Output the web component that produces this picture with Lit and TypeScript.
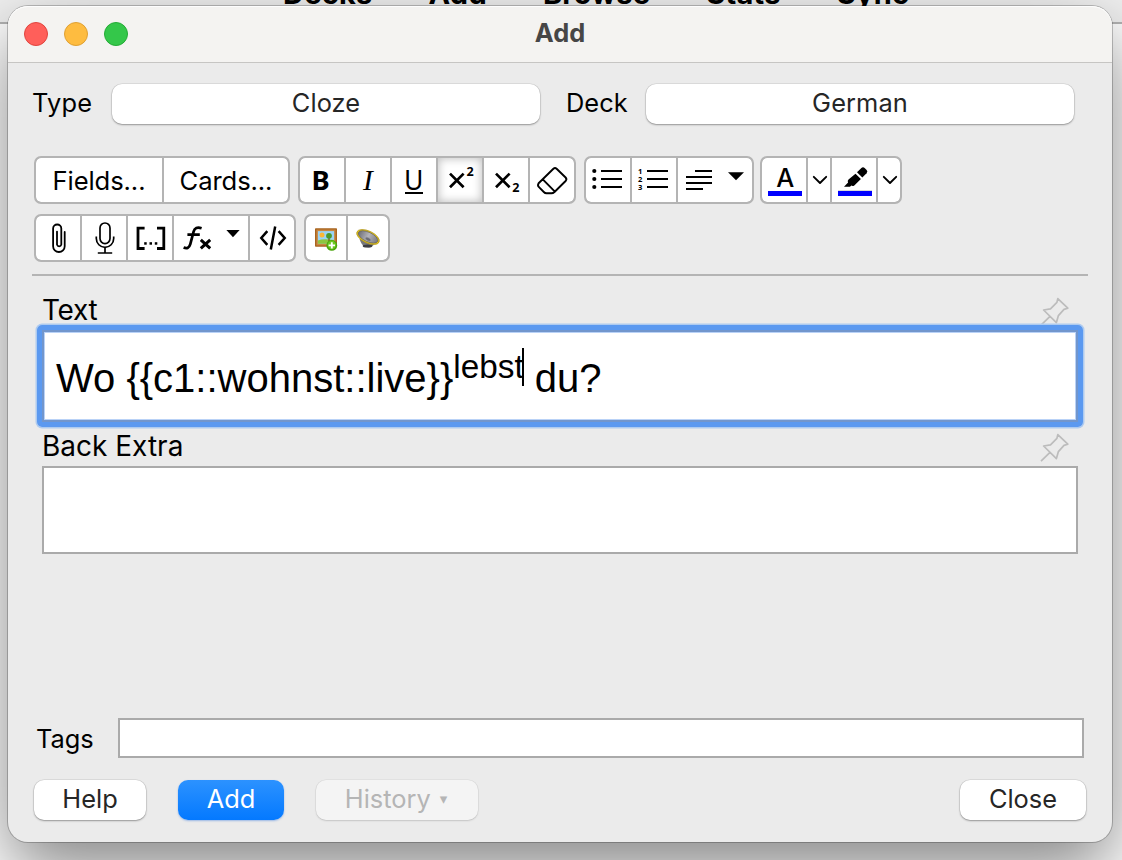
import { LitElement, html, svg, css, type TemplateResult, type SVGTemplateResult } from 'lit';
import { customElement, property } from 'lit/decorators.js';

// Icons share one coordinate space, the toolbar sheet; each button shows its own slice of it.
const slice = (x: number, y: number, w: number, h: number, art: SVGTemplateResult): TemplateResult =>
  html`<svg class="ico" width=${w} height=${h} viewBox="${x} ${y} ${w} ${h}">${art}</svg>`;

const r1 = (x: number, w: number, art: SVGTemplateResult) => slice(x, 158, w, 44, art);
const r2 = (x: number, w: number, art: SVGTemplateResult) => slice(x, 216, w, 44, art);

const cross = (x: number, y: number, w: number, h: number, sw: number) =>
  svg`<path d="M${x} ${y}l${w} ${h}M${x + w} ${y}l${-w} ${h}" stroke-width=${sw}/>`;

const bold = r1(300, 44, svg`<text class="noto b" x="311.6" y="190.2" font-size="27.4">B</text>`);
const italic = r1(346, 44, svg`<text class="serif" x="363" y="190" font-size="29.5">I</text>`);
const underline = r1(392, 44, svg`<text class="noto" x="404" y="189.8" font-size="26.6">U</text><path d="M405 193h18" stroke-width="2"/>`);
const sup = r1(438, 44, svg`${cross(450, 173.6, 13.6, 13.6, 2.7)}<text class="noto b" x="466.4" y="175.8" font-size="12.6">2</text>`);
const sub = r1(484, 44, svg`${cross(496, 173.6, 13.6, 13.6, 2.7)}<text class="noto b" x="512.2" y="191.6" font-size="12.6">2</text>`);
const eraser = r1(530, 44, svg`<path stroke-width="1.9" stroke-linejoin="round" d="M553.4 168.8Q555 167.4 556.6 168.8L565.6 177.5Q567.2 179.3 565.6 181L554.5 192Q553 193.3 551.5 193.3H546.5Q545 193.3 543.8 192L539 187.2Q537.2 185.4 538.6 183.2ZM542.8 179.4L554.4 191.2"/>`);
const bullets = r1(586, 44, svg`<g fill="#000" stroke="none"><circle cx="594.3" cy="171" r="2.1"/><circle cx="594.3" cy="179" r="2.1"/><circle cx="594.3" cy="187" r="2.1"/></g><path stroke-width="2" d="M601 171h21M601 179h21M601 187h21"/>`);
const numbers = r1(632, 44, svg`<g class="noto b" font-size="7.6"><text x="638" y="173.6">1</text><text x="638" y="181.7">2</text><text x="638" y="189.9">3</text></g><path stroke-width="2" d="M647 171h21M647 179h21M647 187h21"/>`);
const align = r1(678, 74, svg`<path stroke-width="2" d="M695 171h17M686 177h26M686 183h26M686 189h17"/><path class="f" d="M728 172.2h16l-8 8z"/>`);
const color = r1(762, 44, svg`<text class="inter" x="776.2" y="186.6" font-size="25.4">A</text><path d="M768 193.5h34" stroke="#00f" stroke-width="5"/>`);
const chev1 = r1(808, 22, svg`<path stroke-width="1.9" stroke-linecap="round" stroke-linejoin="round" d="M813.8 176.8l6.2 6.2l6.2-6.2"/>`);
const marker = r1(832, 44, svg`<path class="f" d="M857 172.2l4.4-4.2q1.6-1.4 3.2 0l2 2q1.5 1.6 0 3.2l-4.3 4.4z"/><path class="f" d="M855.5 173.8l5.4 5.3l-6.6 6.4q-1.6 1-3 .1l-1.3 1.2h-6l4.1-4.2q-1-1.6 .4-3z"/><path d="M838 190.6h34" stroke="#ccc" stroke-width=".8"/><path d="M838 193.5h34" stroke="#00f" stroke-width="5"/>`);
const chev2 = r1(878, 22, svg`<path stroke-width="1.9" stroke-linecap="round" stroke-linejoin="round" d="M883.8 176.8l6.2 6.2l6.2-6.2"/>`);

const clip = r2(36, 44, svg`<path stroke-width="1.8" stroke-linecap="round" d="M64.7 232V246.2A5.8 5.8 0 0 1 53.1 246.2V228.6A4.1 4.1 0 0 1 61.3 228.6V244.6A2.2 2.2 0 0 1 57 244.6V231.6"/>`);
const mic = r2(82, 44, svg`<rect x="100" y="223" width="10" height="20.6" rx="5" stroke-width="1.7"/><path stroke-width="1.7" d="M96.3 236.6V238.6A8.7 8.7 0 0 0 113.7 238.6V236.6M105 247.3V252.6M97.8 253H112.2"/>`);
const cloze = r2(128, 44, svg`<path stroke-width="2.8" d="M144.6 228.1H138V248.5H144.6M157 228.1H163.8V248.5H157"/><g class="f"><rect x="144.2" y="242.2" width="2.5" height="2.5"/><rect x="149.5" y="242.2" width="2.5" height="2.5"/><rect x="154.8" y="242.2" width="2.5" height="2.5"/></g>`);
const fx = r2(174, 74, svg`<path stroke-width="2.7" d="M183.6 247.5Q188.8 249.6 190.3 244.2L193.6 231.6Q195 226.2 201.6 228.3M187.4 234.6H199.8"/>${cross(200.8, 239.8, 9.4, 8.6, 3)}<path class="f" d="M226.4 230h13.2l-6.6 7.2z"/>`);
const code = r2(250, 44, svg`<path stroke-width="2.5" d="M267.3 231.2L261.3 238L267.3 244.8M278.6 231.2L284.7 238L278.6 244.8M275.2 226.4L270.8 249.6"/>`);
const picture = r2(306, 40, svg`<g stroke="none"><rect x="315" y="228.3" width="22" height="18.4" rx=".8" fill="#a8641f"/><rect x="316.4" y="229.6" width="19.2" height="15.8" fill="#c98640"/><rect x="317.9" y="231.1" width="16.2" height="12.6" fill="#9ad4f7"/><path d="M317.9 240.6q5-2.4 16.2-.6v3.7h-16.2z" fill="#8cc63f"/><circle cx="322" cy="235" r="2.5" fill="#fcb736"/><path d="M328.4 241v-4h1.2v4z" fill="#7a4b1a"/><circle cx="329" cy="235.8" r="2.9" fill="#4d9a2a"/><circle cx="331.8" cy="245.4" r="5.4" fill="#4aa50c"/><circle cx="331.8" cy="245" r="4.2" fill="#6cc81f"/></g><path stroke="#fff" stroke-width="1.9" d="M331.8 242.2v6.4M328.6 245.4h6.4"/>`);
const speaker = r2(348, 40, svg`<defs><linearGradient id="cone" x1="0" x2="1" y1="0" y2="0"><stop offset="0" stop-color="#6c6c76"/><stop offset=".5" stop-color="#b4b4ba"/><stop offset="1" stop-color="#77777f"/></linearGradient></defs><g stroke="none"><path d="M359.5 239q2 6.2 5.5 7.8q5 1.8 8.2-1.2l1.5-4z" fill="#75767c"/><ellipse cx="367.5" cy="246" rx="4.8" ry="1.5" fill="#3c3d43"/></g><g transform="rotate(25 368 237)"><ellipse cx="368" cy="237" rx="12.2" ry="6" fill="#e3c51c" stroke="#a88b10" stroke-width=".6"/><ellipse cx="368" cy="236.9" rx="10.6" ry="4.7" fill="url(#cone)" stroke="#5c5a58" stroke-width=".6"/><ellipse cx="369" cy="239" rx="2.8" ry="1.5" fill="#6b6b74" stroke="#8e8e96" stroke-width=".5"/></g>`);

@customElement('push-button')
export class PushButton extends LitElement {
  @property({ reflect: true }) kind = 'plain';
  static styles = css`
    :host { display: flex; box-sizing: border-box; height: 40px; padding: 0 0 2px; border-radius: 10px; align-items: center; justify-content: center;
      background: #fff; color: #262626; box-shadow: 0 0 0 .5px rgba(0,0,0,.12), 0 1px 2px rgba(0,0,0,.32); }
    :host([kind='primary']) { color: #fff; background: linear-gradient(#2c92ff, #0479ff);
      box-shadow: 0 1px 2px rgba(0,90,220,.35); }
    :host([kind='off']) { color: #b5b5b5; background: #f4f4f4; padding-right: 2px;
      box-shadow: 0 0 0 .5px rgba(0,0,0,.07), 0 1px 2px rgba(0,0,0,.13); }
  `;
  render() { return html`<slot></slot>`; }
}

@customElement('tool-group')
export class ToolGroup extends LitElement {
  @property({ attribute: false }) items: TemplateResult[] = [];
  @property({ type: Number }) active = -1;
  static styles = css`
    :host { display: flex; box-sizing: border-box; height: 48px; border: 2px solid #b4b4b4; border-radius: 7px;
      background: #b4b4b4; gap: 2px; overflow: hidden; }
    .cell { display: flex; background: #fff; height: 44px; }
    .cell:first-child { border-radius: 5px 0 0 5px; }
    .cell:last-child { border-radius: 0 5px 5px 0; }
    .on { box-shadow: inset 0 0 9px 1px rgba(0,0,0,.24); }
    .ico { display: block; fill: none; stroke: #000; }
    .f, text { fill: #000; stroke: none; }
    .noto { font-family: 'Noto Sans', sans-serif; }
    .b { font-weight: 700; }
    .serif { font-family: 'Liberation Serif', serif; font-style: italic; }
    .inter { font-family: Inter, sans-serif; font-weight: 450; }
    .word { font: 400 25.6px/45px Inter, sans-serif; text-align: center; }
    .w1 { width: 126px; letter-spacing: -.1px; }
    .w2 { width: 124px; letter-spacing: -.1px; }
  `;
  render() {
    return this.items.map((t, i) => html`<div class="cell ${i === this.active ? 'on' : ''}">${t}</div>`);
  }
}

const pin = html`<svg class="pin" width="30" height="30" viewBox="1040 297 30 30"><path fill="none" stroke="#bcbcbc" stroke-width="1.7" stroke-linejoin="round" d="M1057.8 298.6L1067.8 308.2L1064 309.4L1058.4 315.6L1056.4 322.6L1043.6 310L1050.5 308.8L1056.9 302.4ZM1050 316.4L1041 325.2"/></svg>`;

@customElement('app-root')
export class AppRoot extends LitElement {
  static styles = css`
    :host { display: block; position: relative; width: 1122px; height: 860px; overflow: hidden; box-sizing: border-box;
      background: #fff; font: 400 25.4px/30px Inter, sans-serif; color: #000; }
    .back { height: 22px; background: #f0f0f0; border-bottom: 2px solid #b4b4b4; display: flex; }
    .tabs { display: flex; font: 700 29px/30px Inter, sans-serif; letter-spacing: .25px; margin: -21px 0 0 283px; gap: 56px; height: 30px; }
    .win { position: absolute; left: 8px; top: 6px; width: 1104px; height: 836px; border-radius: 20px; background: #ebebeb;
      box-shadow: 0 0 0 1px rgba(0,0,0,.22), 0 28px 70px rgba(0,0,0,.48); }
    .bar { height: 56px; border-bottom: 1px solid #c6c5c3; background: #f4f3f1; border-radius: 20px 20px 0 0;
      display: grid; grid-template-columns: 1fr auto 1fr; align-items: center; box-shadow: inset 0 1px #fdfdfd; }
    .lights { display: flex; gap: 16px; padding-left: 16px; }
    .dot { width: 24px; height: 24px; border-radius: 50%; box-sizing: border-box; border: 1px solid; }
    .red { background: #ff5f5a; border-color: #e0443e; }
    .amber { background: #febc40; border-color: #dfa033; }
    .green { background: #34c74a; border-color: #24ab36; }
    .title { font-weight: 700; color: #464646; font-size: 25.4px; padding: 0 0 3px; }
    .pick { display: flex; align-items: center; padding: 21px 38px 0 24px; height: 40px; }
    .pick push-button { width: 428px; letter-spacing: .1px; }
    .lt { width: 80px; padding-bottom: 2px; letter-spacing: .2px; }
    .ld { width: 80px; margin-left: 26px; padding-bottom: 2px; }
    .tools { display: flex; gap: 8px; padding: 32px 0 0 26px; }
    .row2 { padding-top: 10px; }
    .gap6 { margin-left: -2px; }
    .rule { margin: 12px 24px 0; height: 2px; background: #b4b4b4; }
    .head { display: flex; justify-content: space-between; margin: 0 42px 0 34px; font-size: 28px; }
    .h1 { height: 34px; padding: 20px 0 0; line-height: 28px; letter-spacing: -.3px; }
    .h2 { height: 34px; padding: 10px 0 0; line-height: 28px; }
    .pin { display: block; margin-top: 1px; }
    .field { margin: 0 34px; box-sizing: border-box; background: #fff; border: 2px solid #aaa; height: 88px; }
    .focus { position: relative; height: 92px; border-color: #7296cc; font: 40px/92px 'Liberation Sans', Arial, sans-serif; padding-left: 12px;
      box-shadow: inset 0 0 0 1px #b9d2f7; white-space: pre; }
    .focus::before { content: ''; position: absolute; inset: -7px; border: 5px solid #5b99f0; border-radius: 5px;
      box-shadow: 0 0 0 1.5px #aecbf0; }
    .up { font-size: 33.3px; line-height: 0; position: relative; top: -14px; vertical-align: baseline; }
    .caret { display: inline-block; width: 2px; height: 38px; background: #000; margin: 0 0 0 -2px; vertical-align: -8px; }
    .tags { display: flex; align-items: center; margin: 164px 28px 0 28px; }
    .tl { width: 82px; padding-top: 2px; }
    .ti { flex: 1; height: 36px; border: 2px solid #aaa; background: #fff; }
    .foot { display: flex; margin: 22px 26px 0; }
    .help { width: 112px; }
    .add { width: 106px; margin-left: 32px; }
    .hist { width: 162px; margin-left: 32px; }
    .close { width: 126px; margin-left: auto; }
    .tri { font: 15px/30px 'DejaVu Sans', sans-serif; margin-left: 9px; }
  `;
  render() {
    return html`
      <div class="back"><div class="tabs"><span>Decks</span><span>Add</span><span>Browse</span><span>Stats</span><span>Sync</span></div></div>
      <div class="win">
        <div class="bar">
          <div class="lights"><i class="dot red"></i><i class="dot amber"></i><i class="dot green"></i></div>
          <div class="title">Add</div><div></div>
        </div>
        <div class="pick">
          <span class="lt">Type</span><push-button>Cloze</push-button>
          <span class="ld">Deck</span><push-button>German</push-button>
        </div>
        <div class="tools">
          <tool-group .items=${[html`<div class="word w1">Fields...</div>`, html`<div class="word w2">Cards...</div>`]}></tool-group>
          <tool-group .items=${[bold, italic, underline, sup, sub, eraser]} .active=${3}></tool-group>
          <tool-group .items=${[bullets, numbers, align]}></tool-group>
          <tool-group class="gap6" .items=${[color, chev1, marker, chev2]}></tool-group>
        </div>
        <div class="tools row2">
          <tool-group .items=${[clip, mic, cloze, fx, code]}></tool-group>
          <tool-group .items=${[picture, speaker]}></tool-group>
        </div>
        <div class="rule"></div>
        <div class="head h1"><span>Text</span>${pin}</div>
        <div class="field focus">Wo {{c1::wohnst::live}}<span class="up">lebst<i class="caret"></i></span> du?</div>
        <div class="head h2"><span>Back Extra</span>${pin}</div>
        <div class="field"></div>
        <div class="tags"><span class="tl">Tags</span><div class="ti"></div></div>
        <div class="foot">
          <push-button class="help">Help</push-button>
          <push-button class="add" kind="primary">Add</push-button>
          <push-button class="hist" kind="off">History<span class="tri">▾</span></push-button>
          <push-button class="close">Close</push-button>
        </div>
      </div>`;
  }
}
